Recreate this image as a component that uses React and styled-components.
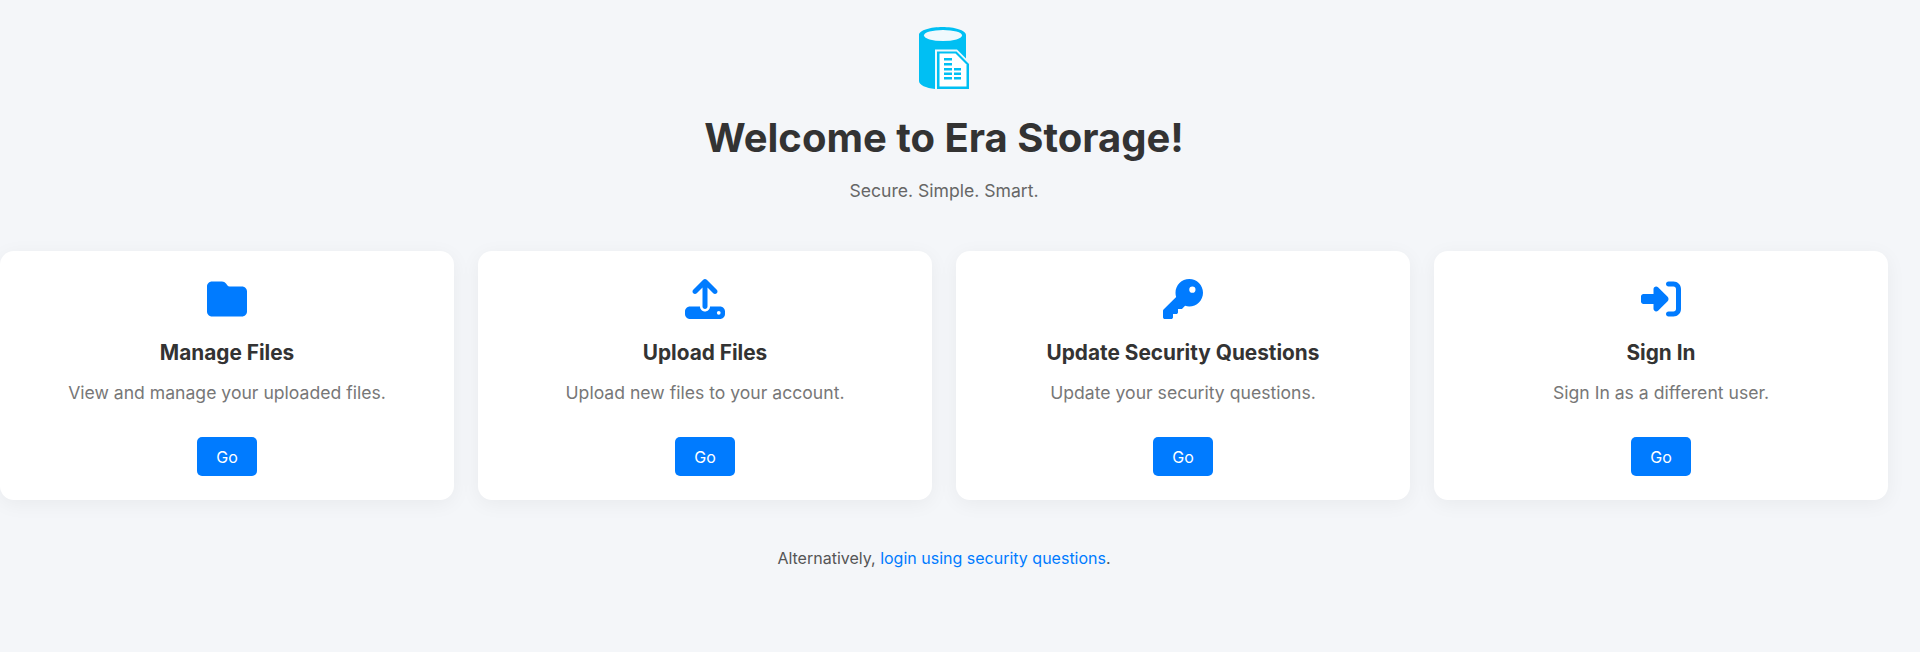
import React from "react";
import styled, { createGlobalStyle } from "styled-components";
import { FaFolder, FaUpload, FaKey, FaRightToBracket } from "react-icons/fa6";

const Global = createGlobalStyle`
  html, body { margin: 0; padding: 0; background: #f4f6f9; }
  body { font-family: Inter, "Noto Sans", sans-serif; color: #333; }
`;

const Page = styled.main`
  box-sizing: border-box;
  width: 1888px;
  min-height: 652px;
  padding-top: 27px;
  display: flex;
  flex-direction: column;
  align-items: center;
`;

const Logo = styled.svg`
  width: 50px;
  height: 62px;
  display: block;
`;

const Title = styled.h1`
  margin: 25px 0 0;
  font-size: 40px;
  line-height: 48px;
  font-weight: 700;
  color: #333;
`;

const Tagline = styled.p`
  margin: 17px 0 0;
  font-size: 17.6px;
  line-height: 24px;
  color: #666;
`;

const Cards = styled.section`
  margin-top: 48px;
  width: 100%;
  display: grid;
  grid-template-columns: repeat(4, 1fr);
  gap: 24px;
`;

const Card = styled.article`
  box-sizing: border-box;
  height: 249px;
  padding: 28px 20px 0;
  background: #fff;
  border-radius: 14px;
  box-shadow: 0 4px 20px rgba(0, 0, 0, 0.05);
  display: flex;
  flex-direction: column;
  align-items: center;
`;

const IconWrap = styled.div`
  height: 40px;
  display: flex;
  align-items: center;
  justify-content: center;
  font-size: 40px;
  color: #007bff;
  svg { display: block; }
`;

const CardTitle = styled.h3`
  margin: 20px 0 0;
  font-size: 20.8px;
  line-height: 28px;
  font-weight: 700;
  color: #333;
`;

const CardText = styled.p`
  margin: 14px 0 0;
  font-size: 17.6px;
  line-height: 24px;
  color: #777;
`;

const GoButton = styled.a`
  margin-top: 32px;
  width: 60px;
  height: 39px;
  display: flex;
  align-items: center;
  justify-content: center;
  background: #007bff;
  color: #fff;
  border-radius: 5px;
  font-size: 16px;
  text-decoration: none;
`;

const Footer = styled.p`
  margin: 46px 0 0;
  font-size: 16px;
  line-height: 24px;
  color: #555;
`;

const FooterLink = styled.a`
  color: #007bff;
  text-decoration: none;
`;

const cards = [
  { icon: <FaFolder />, title: "Manage Files", text: "View and manage your uploaded files." },
  { icon: <FaUpload />, title: "Upload Files", text: "Upload new files to your account." },
  { icon: <FaKey />, title: "Update Security Questions", text: "Update your security questions." },
  { icon: <FaRightToBracket />, title: "Sign In", text: "Sign In as a different user." },
];

const StorageLogo = () => (
  <Logo viewBox="0 0 50 62" aria-hidden="true">
    <path
      fill="#00bff3"
      d="M0 8C0 3 12 0 23.500 0S47 3 47 8v28H30v26H16C7 61 0 58 0 54Z"
    />
    <ellipse cx="24" cy="8.500" rx="19" ry="5.500" fill="#f0f9fd" />
    <path fill="#eef9fd" d="M16 22.500h22L50 34.500V62H16Z" />
    <path fill="#00bff3" d="M18 24.500h19.500L50 37V62H18Z" />
    <path fill="#fff" d="M20.500 26.500h16L47.500 37.500V59.500H20.500Z" />
    <path
      fill="#00bff3"
      d="M25 31h8v2.500h-8Zm0 5h8v2.500h-8Zm0 5h8v2.500h-8Zm10 0h7v2.500h-7Zm-10 4.500h8v2.500h-8Zm10 0h7v2.500h-7Zm-10 4.500h8v2.500h-8Zm10 0h7v2.500h-7Z"
    />
  </Logo>
);

export default function App() {
  return (
    <>
      <Global />
      <Page>
        <StorageLogo />
        <Title>Welcome to Era Storage!</Title>
        <Tagline>Secure. Simple. Smart.</Tagline>
        <Cards>
          {cards.map((c) => (
            <Card key={c.title}>
              <IconWrap>{c.icon}</IconWrap>
              <CardTitle>{c.title}</CardTitle>
              <CardText>{c.text}</CardText>
              <GoButton href="#">Go</GoButton>
            </Card>
          ))}
        </Cards>
        <Footer>
          Alternatively, <FooterLink href="#">login using security questions</FooterLink>.
        </Footer>
      </Page>
    </>
  );
}
